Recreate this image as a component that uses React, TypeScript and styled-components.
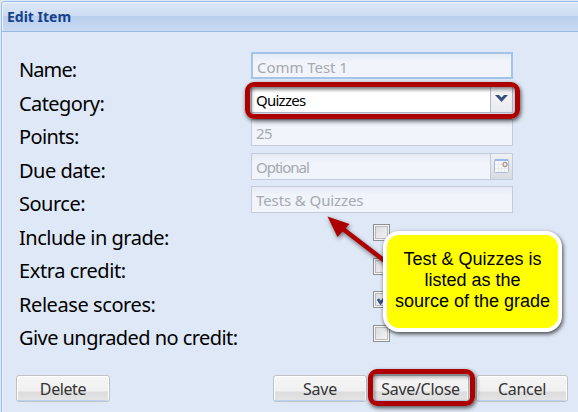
import React from "react";
import styled, { createGlobalStyle, css } from "styled-components";

const Global = createGlobalStyle`
  * { box-sizing: border-box; }
  body { margin: 0; overflow: hidden; background: #dfe8f6; }
`;

const Dialog = styled.div`
  position: relative;
  width: 578px;
  height: 412px;
  overflow: hidden;
  padding: 1px 0 0 1px;
  background: #dfe8f6;
  font-family: "Noto Sans", sans-serif;
`;

const Frame = styled.section`
  height: 411px;
  border: solid #99bbe8;
  border-width: 1px 0 0 1px;
  border-top-left-radius: 4px;
  box-shadow: inset 1px 0 #edf2fb;
  display: flex;
  flex-direction: column;
`;

const Header = styled.header`
  height: 30px;
  flex: none;
  padding-left: 5px;
  border-bottom: 1px solid #99bbe8;
  border-top-left-radius: 3px;
  box-shadow: inset 1px 1px #edf3fc;
  background: linear-gradient(#dce8f7 0, #cddcf1 14px, #b9cfee 14px, #c9daf3 29px);
  color: #15428b;
  font-size: 14px;
  font-weight: 700;
  line-height: 30px;
  letter-spacing: 0;
`;

const Form = styled.div`
  flex: none;
  padding: 20px 0 0 17px;
`;

const Row = styled.div`
  display: grid;
  grid-template-columns: 232px 262px;
  height: 33.5px;
  align-items: start;
`;

const Label = styled.label<{ $track: number }>`
  font-size: 20px;
  line-height: 36px;
  letter-spacing: ${(p) => p.$track}px;
  white-space: nowrap;
  color: #000;
`;

const Field = styled.div<{ $kind?: "focus" | "active" }>`
  display: flex;
  height: 27px;
  border: 1px solid #c3cbdd;
  background: linear-gradient(#e5eaf4, #f1f4fa 8px);
  color: #a5a9af;
  font-size: 15px;
  line-height: 26px;
  ${(p) => p.$kind === "focus" && css`border: 2px solid #a3c4e6; line-height: 26px;`}
  ${(p) =>
    p.$kind === "active" &&
    css`
      border-color: #b5b8c8;
      background: linear-gradient(#e4e4e4, #fff 5px);
      color: #000;
    `}
`;

const Value = styled.span<{ $track: number; $inset: number }>`
  flex: 1;
  padding-left: ${(p) => p.$inset}px;
  letter-spacing: ${(p) => p.$track}px;
  white-space: nowrap;
`;

const Trigger = styled.span<{ $muted?: boolean }>`
  width: 22px;
  height: 100%;
  border-left: 1px solid ${(p) => (p.$muted ? "#c3cbdd" : "#b5b8c8")};
  background: ${(p) => (p.$muted ? "linear-gradient(#f0f1f4, #d8dbdf)" : "linear-gradient(#f7f7f8, #e9eaed)")};
  svg { display: block; }
`;

const Box = styled.span`
  display: block;
  width: 17px;
  height: 17px;
  margin: 4.5px 0 0 122px;
  border: 1px solid #8e8f8f;
  box-shadow: inset 0 0 0 1px #f6f6f6, inset 0 0 0 2px #b9bbbf;
  background: linear-gradient(135deg, #d5d8dd, #f7f7f7);
  svg { display: block; }
`;

const Footer = styled.footer`
  display: flex;
  padding: 21.5px 0 0 14px;
`;

const Button = styled.button<{ $w: number; $before?: number; $track: number }>`
  width: ${(p) => p.$w}px;
  height: 27px;
  flex: none;
  margin: 0 0 0 ${(p) => p.$before ?? 0}px;
  padding: 0;
  border: 1px solid #bfc1c4;
  border-radius: 3px;
  box-shadow: inset 1px 1px #fff, inset -1px 0 #fff, inset 0 -1px #bcd2f2;
  background: linear-gradient(#f5f5f5 0, #f0f0f0 15px, #dcdcdc 16px, #e5e5e5 100%);
  color: #333;
  font: 16px/27px "Noto Sans", sans-serif;
  letter-spacing: ${(p) => p.$track}px;
  white-space: nowrap;
`;

const Highlight = styled.div<{ $x: number; $y: number; $w: number; $h: number }>`
  position: absolute;
  left: ${(p) => p.$x}px;
  top: ${(p) => p.$y}px;
  width: ${(p) => p.$w}px;
  height: ${(p) => p.$h}px;
  border: 5px solid #ad0000;
  border-radius: 9px;
  box-shadow: 1px 2px 4px rgba(0, 0, 0, 0.65), inset 1px 2px 4px rgba(0, 0, 0, 0.55);
`;

const Arrow = styled.svg`
  position: absolute;
  left: 320px;
  top: 208px;
  filter: drop-shadow(1px 2px 2px rgba(0, 0, 0, 0.5));
`;

const Callout = styled.div`
  position: absolute;
  left: 383px;
  top: 231px;
  width: 179px;
  height: 101px;
  padding-top: 14px;
  border: 4px solid #fff;
  border-radius: 16px;
  background: #ffff00;
  box-shadow: 1px 2px 4px rgba(0, 0, 0, 0.7);
  color: #000;
  font: 18px/21px "Liberation Sans", Arial, sans-serif;
  letter-spacing: 0;
  text-align: center;
  white-space: nowrap;
`;

const Chevron = () => (
  <svg width="21" height="25" viewBox="0 0 21 25">
    <path d="M4 8h4l2.5 2.5L13 8h4l-6.5 7z" fill="#34507f" />
  </svg>
);

const Calendar = () => (
  <svg width="21" height="25" viewBox="0 0 21 25">
    <rect x="3.5" y="5.5" width="14" height="13" rx="1" fill="#f5f6f8" stroke="#aebbd4" />
    <path d="M4 6h13" stroke="#9eb9e6" strokeWidth="2" />
    <path d="M7.5 8v10M10.5 8v10M13.5 8v10M4 10.5h13M4 14.5h13" stroke="#e8eaee" />
    <circle cx="14" cy="10.5" r="2" fill="#fff" stroke="#a79a98" strokeWidth="1.3" />
  </svg>
);

const checks = [
  { label: "Include in grade:", track: -0.48 },
  { label: "Extra credit:", track: -0.4 },
  { label: "Release scores:", track: -0.42, on: true },
  { label: "Give ungraded no credit:", track: -0.56 },
];

export default function App() {
  return (
    <>
      <Global />
      <Dialog>
        <Frame>
          <Header>Edit Item</Header>
          <Form>
            <Row>
              <Label $track={-0.9}>Name:</Label>
              <Field $kind="focus"><Value $inset={4} $track={-0.05}>Comm Test 1</Value></Field>
            </Row>
            <Row>
              <Label $track={-0.6}>Category:</Label>
              <Field $kind="active">
                <Value $inset={4} $track={-0.75}>Quizzes</Value>
                <Trigger><Chevron /></Trigger>
              </Field>
            </Row>
            <Row>
              <Label $track={-0.6}>Points:</Label>
              <Field><Value $inset={4} $track={-0.6}>25</Value></Field>
            </Row>
            <Row>
              <Label $track={-0.5}>Due date:</Label>
              <Field>
                <Value $inset={4} $track={-1}>Optional</Value>
                <Trigger $muted><Calendar /></Trigger>
              </Field>
            </Row>
            <Row>
              <Label $track={-0.5}>Source:</Label>
              <Field><Value $inset={4} $track={-0.1}>Tests &amp; Quizzes</Value></Field>
            </Row>
            {checks.map((c) => (
              <Row key={c.label}>
                <Label $track={c.track}>{c.label}</Label>
                <Box>
                  {c.on && (
                    <svg width="15" height="15" viewBox="0 0 15 15">
                      <path d="M4 7l2.5 4L12 4" fill="none" stroke="#34508c" strokeWidth="2.6" />
                    </svg>
                  )}
                </Box>
              </Row>
            ))}
          </Form>
          <Footer>
            <Button $w={94} $track={-0.4}>Delete</Button>
            <Button $w={94} $before={163} $track={-0.2}>Save</Button>
            <Button $w={97} $before={5} $track={-0.3}>Save/Close</Button>
            <Button $w={92} $before={7} $track={-0.3}>Cancel</Button>
          </Footer>
        </Frame>
        <Highlight $x={245} $y={82} $w={275} $h={37} />
        <Highlight $x={368} $y={369} $w={107} $h={37} />
        <Arrow width="80" height="65" viewBox="320 208 80 65">
          <path d="M343 229L390 265" stroke="#ad0000" strokeWidth="4.5" />
          <path d="M327.5 216.5L349.5 224L337.5 237z" fill="#ad0000" />
        </Arrow>
        <Callout>
          Test &amp; Quizzes is
          <br />
          listed as the
          <br />
          source of the grade
        </Callout>
      </Dialog>
    </>
  );
}
